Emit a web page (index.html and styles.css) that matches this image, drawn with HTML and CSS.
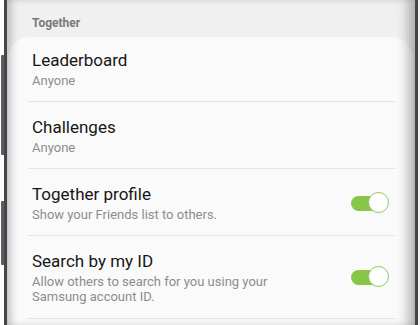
FILE: index.html
```html
<!DOCTYPE html>
<html>
<head>
<meta charset="utf-8">
<link rel="stylesheet" href="styles.css">
</head>
<body>
<div class="phone">
  <div class="side side-left">
    <span class="btn btn-a"></span>
    <span class="btn btn-b"></span>
  </div>
  <div class="line"></div>
  <div class="screen">
    <div class="section-title">Together</div>
    <div class="card">
      <div class="row">
        <div class="text">
          <div class="title">Leaderboard</div>
          <div class="sub">Anyone</div>
        </div>
      </div>
      <div class="row">
        <div class="text">
          <div class="title">Challenges</div>
          <div class="sub">Anyone</div>
        </div>
      </div>
      <div class="row">
        <div class="text">
          <div class="title">Together profile</div>
          <div class="sub">Show your Friends list to others.</div>
        </div>
        <div class="toggle"><span class="track"></span><span class="thumb"></span></div>
      </div>
      <div class="row">
        <div class="text">
          <div class="title">Search by my ID</div>
          <div class="sub">Allow others to search for you using your<br>Samsung account ID.</div>
        </div>
        <div class="toggle"><span class="track"></span><span class="thumb"></span></div>
      </div>
    </div>
  </div>
  <div class="line"></div>
  <div class="side side-right"></div>
</div>
</body>
</html>
```

FILE: styles.css
```css
html, body {
  margin: 0;
  padding: 0;
  background: #ffffff;
}
body {
  width: 420px;
  height: 325px;
  overflow: hidden;
  font-family: Roboto, "Liberation Sans", sans-serif;
}
.phone {
  display: flex;
  height: 325px;
}
.side {
  position: relative;
  background: #ffffff;
}
.side-left { width: 4px; }
.side-right { width: 2px; background: #f4f4f4; }
.btn {
  position: absolute;
  left: 1px;
  width: 3px;
  background: #5d5d64;
  border-radius: 1px 0 0 1px;
}
.btn-a { top: 55px; height: 100px; }
.btn-b { top: 201px; height: 64px; }
.line {
  width: 3px;
  background: #45454c;
}
.screen {
  flex: 1;
  position: relative;
  background: #f0f0f0;
  padding-top: 16px;
  overflow: hidden;
}
.screen::after {
  content: "";
  position: absolute;
  inset: 0;
  pointer-events: none;
  box-shadow: inset 9px 0 9px -5px rgba(0,0,0,0.22), inset -12px 0 12px -5px rgba(0,0,0,0.28);
}
.section-title {
  padding-left: 25px;
  font-size: 12px;
  line-height: 15px;
  font-weight: bold;
  color: #7a7a7a;
  margin-bottom: 6px;
}
.card {
  margin: 0 2px 0 1px;
  background: #fafafa;
  border-radius: 22px 22px 0 0;
  min-height: 300px;
}
.row {
  display: flex;
  align-items: center;
  justify-content: space-between;
  margin: 0 18px 0 20px;
  padding: 14px 6px 13px 4px;
  border-bottom: 1px solid #e4e4e4;
}
.row:first-child { padding-top: 12px; }
.row:last-child { padding-bottom: 14px; }
.title {
  font-size: 17px;
  line-height: 22px;
  color: #161616;
}
.sub {
  margin-top: 2px;
  font-size: 13px;
  line-height: 15px;
  color: #8d8d8d;
}
.toggle {
  position: relative;
  width: 38px;
  height: 22px;
  flex: none;
}
.track {
  position: absolute;
  left: 0;
  top: 4px;
  width: 32px;
  height: 15px;
  border-radius: 8px;
  background: #88c64a;
}
.thumb {
  position: absolute;
  right: 0;
  top: 0;
  width: 19px;
  height: 19px;
  border-radius: 50%;
  background: #ffffff;
  border: 1.5px solid #8cc850;
}
```
